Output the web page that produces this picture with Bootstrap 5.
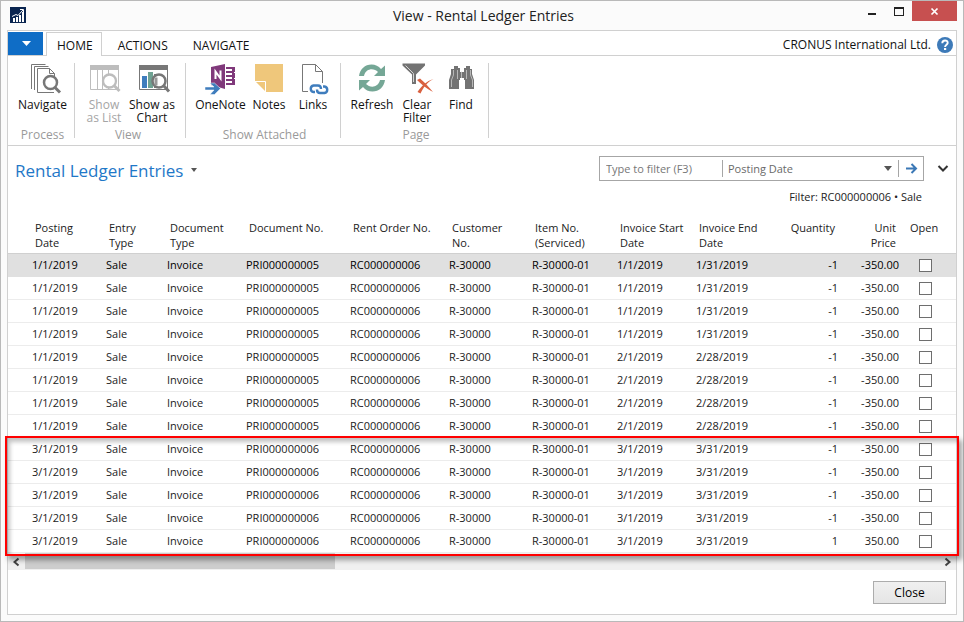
<!DOCTYPE html>
<html lang="en">
<head>
<meta charset="utf-8">
<meta name="viewport" content="width=device-width, initial-scale=1">
<title>View - Rental Ledger Entries</title>
<link href="https://cdn.jsdelivr.net/npm/bootstrap@5.3.0/dist/css/bootstrap.min.css" rel="stylesheet">
<style>
  body { font-family: "Open Sans", "Noto Sans", sans-serif; font-size: 12px; line-height: 15px; color: #222; background: #fbfbfb; }
  button, input, select { font: inherit; color: inherit; }
  button { border: 0; background: none; padding: 0; }
  svg { display: block; overflow: visible; }
  .app-window { border: 1px solid #b9b9b9; min-height: 100vh; }
  .title-bar { height: 29px; padding-left: 9px; padding-right: 6px; }
  .app-logo { width: 136px; padding-top: 6px; }
  .window-title { font-size: 14px; line-height: 30px; }
  .window-controls { width: 136px; }
  .win-btn { width: 26px; height: 20px; }
  .win-close { width: 45px; height: 20px; background: #c75050; }
  .frame { margin: 0 6px 6px; border: 1px solid #d0d0d0; background: #fff; }
  .tab-strip { height: 25px; border-bottom: 1px solid #d0d0d0; }
  .app-menu { width: 35px; height: 23px; background: #0f6dc6; margin-top: 1px; }
  .ribbon-tabs a { display: block; color: #111; text-decoration: none; line-height: 24px; height: 24px; margin-top: 1px; border: 1px solid transparent; border-bottom: 0; }
  .ribbon-tabs li + li a { padding: 1px 8px 0 15px; }
  .ribbon-tabs a.current { border-color: #d0d0d0; background: #fff; padding: 1px 8px 0 10px; margin-left: 3px; }
  .company { padding: 3px 3px 0 0; gap: 6px; color: #111; }
  .ribbon { height: 90px; padding: 7px 0; border-bottom: 1px solid #d0d0d0; }
  .ribbon-group { border-right: 1px solid #d0d0d0; padding: 0 5px 0 8px; height: 75px; }
  .ribbon-group.narrow { padding: 0 9px 0 5px; }
  .ribbon-btn { width: 46px; line-height: 13px; color: #111; font-size: 12px; }
  .ribbon-btn.w-lg { width: 53px; }
  .ribbon-btn.w-md { width: 48px; }
  .ribbon-btn.w-sm { width: 44px; }
  .ribbon-btn svg { width: 32px; height: 32px; margin: 0 auto 3px; }
  .ribbon-btn:disabled { color: #a5a5a5; }
  .group-name { color: #9a9a9a; line-height: 14px; margin-bottom: -4px; text-align: center; }
  .page-head { padding: 10px 8px 0 7px; }
  .page-title { font-size: 17px; line-height: 30px; color: #1f78c8; font-weight: 400; margin: 0; }
  .filter-box { border: 1px solid #a6a6a6; width: 325px; height: 25px; color: #6a6a6a; margin-right: 14px; }
  .filter-box input { border: 0; width: 122px; padding: 0 6px; outline: 0; font-size: 11px; }
  .filter-box input::placeholder { color: #777; opacity: 1; }
  .filter-box select { border: 0; border-left: 1px solid #a6a6a6; padding: 0 5px; height: 17px; appearance: none; background: transparent; outline: 0; line-height: 16px; font-size: 11px; }
  .filter-box .go { border-left: 1px solid #a6a6a6; width: 25px; height: 17px; padding-left: 6px; }
  .filter-text { padding: 0 34px 0 0; line-height: 16px; margin-top: 3px; font-size: 11px; }
  .entries { width: 100%; table-layout: fixed; margin-top: 15px; border-collapse: separate; border-spacing: 0; font-size: 11px; }
  .entries th { font-weight: 400; vertical-align: top; padding: 0 0 3px 7px; height: 34px; border-bottom: 1px solid #d0d0d0; }
  .entries td { height: 23px; padding: 0 0 0 4px; border-bottom: 1px solid #ececec; line-height: 22px; white-space: nowrap; }
  .entries th:first-child { padding-left: 27px; }
  .entries td:first-child { padding-left: 24px; }
  .entries .amount { text-align: right; }
  .entries th.amount { padding-right: 7px; padding-left: 0; }
  .entries td.amount { padding-right: 4px; }
  .entries tr.selected td { background: #e0e0e0; color: #000; border-bottom-color: #e0e0e0; }
  .entries td:last-child { padding-left: 16px; }
  .entries input { appearance: none; display: block; width: 13px; height: 13px; border: 1px solid #6e6e6e; background: #fff; margin: 1px 0 0; }
  .marked { position: relative; }
  .marked::after { content: ""; position: absolute; inset: -2px -3px -3px; border: 2px solid #f00; box-shadow: 3px 4px 5px rgba(0,0,0,.36), inset 3px 4px 4px rgba(0,0,0,.24); pointer-events: none; z-index: 2; }
  .scroll-strip { height: 17px; background: #f0f0f0; }
  .scroll-strip button { width: 17px; height: 17px; }
  .scroll-thumb { width: 32.7%; height: 16px; background: #cdcdcd; }
  .dialog-foot { padding: 11px 10px 10px; }
  .close-btn { width: 73px; height: 23px; border: 1px solid #acacac; background: linear-gradient(#f0f0f0, #e5e5e5); color: #000; }
</style>
</head>
<body>
<div class="app-window d-flex flex-column">
  <header class="title-bar d-flex justify-content-between align-items-start">
    <div class="app-logo">
      <svg width="16" height="16" viewBox="0 0 16 16" role="img" aria-label="Dynamics NAV"><path fill="#0a2550" d="M0 0h16v16H0z"/><path fill="#fff" d="M3 11h2v4H3zM6 10h2v5H6zM9 8h2v7H9zM12 5h2v10h-2z"/><path d="M2 9.500l4-2 2 1L13 3M10 2.500h3.500V6" fill="none" stroke="#fff"/></svg>
    </div>
    <div class="window-title">View - Rental Ledger Entries</div>
    <div class="window-controls d-flex justify-content-end">
      <button class="win-btn" aria-label="Minimize"><svg width="26" height="20"><path d="M8 12h8v2H8z" fill="#222"/></svg></button>
      <button class="win-btn" aria-label="Maximize"><svg width="26" height="20"><path d="M8 6h10v9H8zM9 8v6h8V8z" fill="#222" fill-rule="evenodd"/></svg></button>
      <button class="win-close" aria-label="Close window"><svg width="45" height="20"><path d="M19.500 7.500l6 6M25.500 7.500l-6 6" stroke="#fff" stroke-width="1.700"/></svg></button>
    </div>
  </header>

  <main class="frame flex-grow-1 d-flex flex-column">
    <div class="tab-strip d-flex">
      <button class="app-menu" aria-label="Application menu"><svg width="35" height="23"><path d="M14 9h9l-4.500 5z" fill="#fff"/></svg></button>
      <ul class="ribbon-tabs list-unstyled d-flex mb-0">
        <li><a href="#" class="current">HOME</a></li>
        <li><a href="#">ACTIONS</a></li>
        <li><a href="#">NAVIGATE</a></li>
      </ul>
      <div class="company ms-auto d-flex align-items-center">
        <span>CRONUS International Ltd.</span>
        <button aria-label="Help"><svg width="16" height="16" viewBox="0 0 16 16"><circle cx="8" cy="8" r="8" fill="#3d7ab8"/><path d="M5.300 6.200c0-3.700 5.600-3.500 5.400-.3C10.600 7.700 8.100 7.700 8.100 10" fill="none" stroke="#fff" stroke-width="1.900"/><path fill="#fff" d="M7 11h2.200v2H7z"/></svg></button>
      </div>
    </div>

    <div class="ribbon d-flex">
      <section class="ribbon-group d-flex flex-column justify-content-between">
        <div class="d-flex align-items-start">
          <button class="ribbon-btn w-lg"><svg viewBox="0 0 32 32" fill="none" stroke="#777"><path d="M4.500 26V1.500h14M7.500 27V3.500h14M27 29.500H10.500v-24h12l5 5V14M22.500 5.500v5h5"/><circle cx="23.500" cy="19.500" r="6.500" fill="#fff" stroke-width="2.500"/><path d="M28 24.500l5 5" stroke-width="3"/></svg>Navigate</button>
        </div>
        <div class="group-name">Process</div>
      </section>
      <section class="ribbon-group narrow d-flex flex-column justify-content-between">
        <div class="d-flex align-items-start">
          <button class="ribbon-btn w-md" disabled><svg viewBox="0 0 32 32" fill="none" stroke="#bdbdbd"><path d="M2 2h29v5H2z" fill="#bdbdbd" stroke="none"/><path d="M2.500 5v21.500h28V5M9.500 7v19M14.500 7v19M20.500 7v19"/><circle cx="21.500" cy="18" r="6.500" fill="#fff" stroke-width="2.300"/><path d="M26 22.500l5.500 5.500" stroke-width="3"/></svg>Show<br>as List</button>
          <button class="ribbon-btn w-md"><svg viewBox="0 0 32 32" fill="none" stroke="#777"><path d="M3 2h29v5H3z" fill="#777" stroke="none"/><path d="M3.500 5v21.500h28V5"/><path d="M6 13h5v12H6z" fill="#3f7dbd" stroke="none"/><path d="M12 9h5v16h-5z" fill="#6fa292" stroke="none"/><path d="M18 11h5v14h-5z" fill="#777" stroke="none"/><circle cx="23" cy="18" r="6.500" fill="#fff" stroke-width="2.500"/><path d="M18.500 14.500h3v8h-3z" fill="#999" stroke="none"/><path d="M27.500 22.500l5.500 6" stroke-width="3"/></svg>Show as Chart</button>
        </div>
        <div class="group-name">View</div>
      </section>
      <section class="ribbon-group d-flex flex-column justify-content-between">
        <div class="d-flex align-items-start">
          <button class="ribbon-btn w-lg"><svg viewBox="0 0 32 32"><path d="M6 4l14-3v25L6 22z" fill="#80397b"/><path d="M10.500 16V8.500l5 7V7.500" fill="none" stroke="#fff" stroke-width="2"/><path d="M21 4h9v5h-1v1h1v5h-1v1h1v6h-9v-2h6v-2h-6v-2h6v-2h-6v-2h6v-2h-6V8h6V6h-6z" fill="#80397b"/><path d="M0 24h9l-4-4h4.500l6 5.500-6 6H5l4-4.500H0z" fill="#3f7dbd" stroke="#fff" stroke-width=".5"/></svg>OneNote</button>
          <button class="ribbon-btn w-sm"><svg viewBox="0 0 32 32"><path d="M2 1h28v28H13L2 18z" fill="#efc77b"/><path d="M2 18.500h10.500V29" fill="none" stroke="#fff"/></svg>Notes</button>
          <button class="ribbon-btn w-sm"><svg viewBox="0 0 32 32" fill="none"><path d="M11 28.500H5.500v-27h13l7 7V20M18.500 1.500v7h7" stroke="#777"/><g stroke="#3f7dbd" stroke-width="2.400"><path d="M18 29h-1.500a3.300 3.300 0 010-6.500H21c2 0 3 1.500 3 3.500"/><path d="M26 23.500h1.500a3.300 3.300 0 010 6.500H23c-2 0-3-1.500-3-3.500"/></g></svg>Links</button>
        </div>
        <div class="group-name">Show Attached</div>
      </section>
      <section class="ribbon-group d-flex flex-column justify-content-between">
        <div class="d-flex align-items-start">
          <button class="ribbon-btn"><svg viewBox="0 0 32 32"><g fill="#75a796"><path d="M3 13C4 6 9 1.500 15.500 1.500c4 0 7 1.500 9.500 4.500l4-3.500V13H18l4-4c-4-4-12-4-14 4z"/><path d="M29 17c-1 7-6 11.500-12.500 11.500-4 0-7-1.500-9.500-4.500l-4 3.500V17h11l-4 4c4 4 12 4 14-4z"/></g></svg>Refresh</button>
          <button class="ribbon-btn w-sm"><svg viewBox="0 0 32 32"><path d="M1.500.500h22.500v2L15 11.500V21h-4v-9.500L1.500 2.500z" fill="#737373"/><path d="M4.500 2.500l8 8V19" fill="none" stroke="#d5d5d5"/><path d="M16 17l3-1.500c5 4 9 9 13 13.500-6-3-11-7-16-12z" fill="#d9603f"/><path d="M32.500 16c-6 3-10 8-13 14.500l-3-1.500c4-6 9-11 16-13z" fill="#d9603f"/></svg>Clear Filter</button>
          <button class="ribbon-btn w-sm"><svg viewBox="0 0 32 32" fill="#737373"><path d="M9 3h4v2h2v4h4V5h2V3h4v3h2v5l2 6v9H20v-9h-1v-2h-4v2h-1v9H4v-9l2-6V6h3z"/><path d="M8.500 7v5l-2 5v7M12.500 7v9M21.500 7v9M25.500 7v5l2 5v7M16.500 8v7" fill="none" stroke="#e8e8e8" stroke-width=".6"/></svg>Find</button>
        </div>
        <div class="group-name">Page</div>
      </section>
    </div>

    <div class="page-head d-flex align-items-start">
      <h1 class="page-title">Rental Ledger Entries</h1>
      <button class="p-2 mt-1" aria-label="Page menu"><svg width="7" height="4"><path d="M0 0h6L3 4z" fill="#555"/></svg></button>
      <form class="filter-box d-flex align-items-center ms-auto">
        <input type="text" placeholder="Type to filter (F3)" aria-label="Type to filter">
        <select class="flex-grow-1" aria-label="Filter field"><option>Posting Date</option></select>
        <svg width="15" height="5"><path d="M1 0h8L5 5z" fill="#555"/></svg>
        <button type="button" class="go" aria-label="Apply filter"><svg width="13" height="11"><path d="M1 5.500h10M6.500 1l4.500 4.500L6.500 10" fill="none" stroke="#3b78b6" stroke-width="2"/></svg></button>
      </form>
      <button class="mt-2" aria-label="Expand filters"><svg width="10" height="10"><path d="M.500 2l4.500 4.500L9.500 2" fill="none" stroke="#333" stroke-width="2"/></svg></button>
    </div>
    <div class="filter-text text-end">Filter: RC000000006 • Sale</div>

    <table class="entries">
      <colgroup><col style="width:94px"><col style="width:61px"><col style="width:79px"><col style="width:104px"><col style="width:99px"><col style="width:83px"><col style="width:85px"><col style="width:79px"><col style="width:78px"><col style="width:72px"><col style="width:61px"><col></colgroup>
      <thead>
        <tr><th>Posting<br>Date</th><th>Entry<br>Type</th><th>Document<br>Type</th><th>Document No.</th><th>Rent Order No.</th><th>Customer<br>No.</th><th>Item No.<br>(Serviced)</th><th>Invoice Start<br>Date</th><th>Invoice End<br>Date</th><th class="amount">Quantity</th><th class="amount">Unit<br>Price</th><th>Open</th></tr>
      </thead>
      <tbody>
        <tr class="selected"><td>1/1/2019</td><td>Sale</td><td>Invoice</td><td>PRI000000005</td><td>RC000000006</td><td>R-30000</td><td>R-30000-01</td><td>1/1/2019</td><td>1/31/2019</td><td class="amount">-1</td><td class="amount">-350.00</td><td><input type="checkbox" aria-label="Open"></td></tr>
        <tr><td>1/1/2019</td><td>Sale</td><td>Invoice</td><td>PRI000000005</td><td>RC000000006</td><td>R-30000</td><td>R-30000-01</td><td>1/1/2019</td><td>1/31/2019</td><td class="amount">-1</td><td class="amount">-350.00</td><td><input type="checkbox" aria-label="Open"></td></tr>
        <tr><td>1/1/2019</td><td>Sale</td><td>Invoice</td><td>PRI000000005</td><td>RC000000006</td><td>R-30000</td><td>R-30000-01</td><td>1/1/2019</td><td>1/31/2019</td><td class="amount">-1</td><td class="amount">-350.00</td><td><input type="checkbox" aria-label="Open"></td></tr>
        <tr><td>1/1/2019</td><td>Sale</td><td>Invoice</td><td>PRI000000005</td><td>RC000000006</td><td>R-30000</td><td>R-30000-01</td><td>1/1/2019</td><td>1/31/2019</td><td class="amount">-1</td><td class="amount">-350.00</td><td><input type="checkbox" aria-label="Open"></td></tr>
        <tr><td>1/1/2019</td><td>Sale</td><td>Invoice</td><td>PRI000000005</td><td>RC000000006</td><td>R-30000</td><td>R-30000-01</td><td>2/1/2019</td><td>2/28/2019</td><td class="amount">-1</td><td class="amount">-350.00</td><td><input type="checkbox" aria-label="Open"></td></tr>
        <tr><td>1/1/2019</td><td>Sale</td><td>Invoice</td><td>PRI000000005</td><td>RC000000006</td><td>R-30000</td><td>R-30000-01</td><td>2/1/2019</td><td>2/28/2019</td><td class="amount">-1</td><td class="amount">-350.00</td><td><input type="checkbox" aria-label="Open"></td></tr>
        <tr><td>1/1/2019</td><td>Sale</td><td>Invoice</td><td>PRI000000005</td><td>RC000000006</td><td>R-30000</td><td>R-30000-01</td><td>2/1/2019</td><td>2/28/2019</td><td class="amount">-1</td><td class="amount">-350.00</td><td><input type="checkbox" aria-label="Open"></td></tr>
        <tr><td>1/1/2019</td><td>Sale</td><td>Invoice</td><td>PRI000000005</td><td>RC000000006</td><td>R-30000</td><td>R-30000-01</td><td>2/1/2019</td><td>2/28/2019</td><td class="amount">-1</td><td class="amount">-350.00</td><td><input type="checkbox" aria-label="Open"></td></tr>
      </tbody>
      <tbody class="marked">
        <tr><td>3/1/2019</td><td>Sale</td><td>Invoice</td><td>PRI000000006</td><td>RC000000006</td><td>R-30000</td><td>R-30000-01</td><td>3/1/2019</td><td>3/31/2019</td><td class="amount">-1</td><td class="amount">-350.00</td><td><input type="checkbox" aria-label="Open"></td></tr>
        <tr><td>3/1/2019</td><td>Sale</td><td>Invoice</td><td>PRI000000006</td><td>RC000000006</td><td>R-30000</td><td>R-30000-01</td><td>3/1/2019</td><td>3/31/2019</td><td class="amount">-1</td><td class="amount">-350.00</td><td><input type="checkbox" aria-label="Open"></td></tr>
        <tr><td>3/1/2019</td><td>Sale</td><td>Invoice</td><td>PRI000000006</td><td>RC000000006</td><td>R-30000</td><td>R-30000-01</td><td>3/1/2019</td><td>3/31/2019</td><td class="amount">-1</td><td class="amount">-350.00</td><td><input type="checkbox" aria-label="Open"></td></tr>
        <tr><td>3/1/2019</td><td>Sale</td><td>Invoice</td><td>PRI000000006</td><td>RC000000006</td><td>R-30000</td><td>R-30000-01</td><td>3/1/2019</td><td>3/31/2019</td><td class="amount">-1</td><td class="amount">-350.00</td><td><input type="checkbox" aria-label="Open"></td></tr>
        <tr><td>3/1/2019</td><td>Sale</td><td>Invoice</td><td>PRI000000006</td><td>RC000000006</td><td>R-30000</td><td>R-30000-01</td><td>3/1/2019</td><td>3/31/2019</td><td class="amount">1</td><td class="amount">350.00</td><td><input type="checkbox" aria-label="Open"></td></tr>
      </tbody>
    </table>
    <div class="scroll-strip d-flex">
      <button aria-label="Scroll left"><svg width="17" height="17"><path d="M10.500 5.500l-4 3.500 4 3.500" fill="none" stroke="#444" stroke-width="2"/></svg></button>
      <div class="scroll-thumb"></div>
      <button class="ms-auto" aria-label="Scroll right"><svg width="17" height="17"><path d="M6.500 5.500l4 3.500-4 3.500" fill="none" stroke="#444" stroke-width="2"/></svg></button>
    </div>
    <footer class="dialog-foot d-flex justify-content-end">
      <button class="close-btn">Close</button>
    </footer>
  </main>
</div>
<script src="https://cdn.jsdelivr.net/npm/bootstrap@5.3.0/dist/js/bootstrap.bundle.min.js"></script>
</body>
</html>
